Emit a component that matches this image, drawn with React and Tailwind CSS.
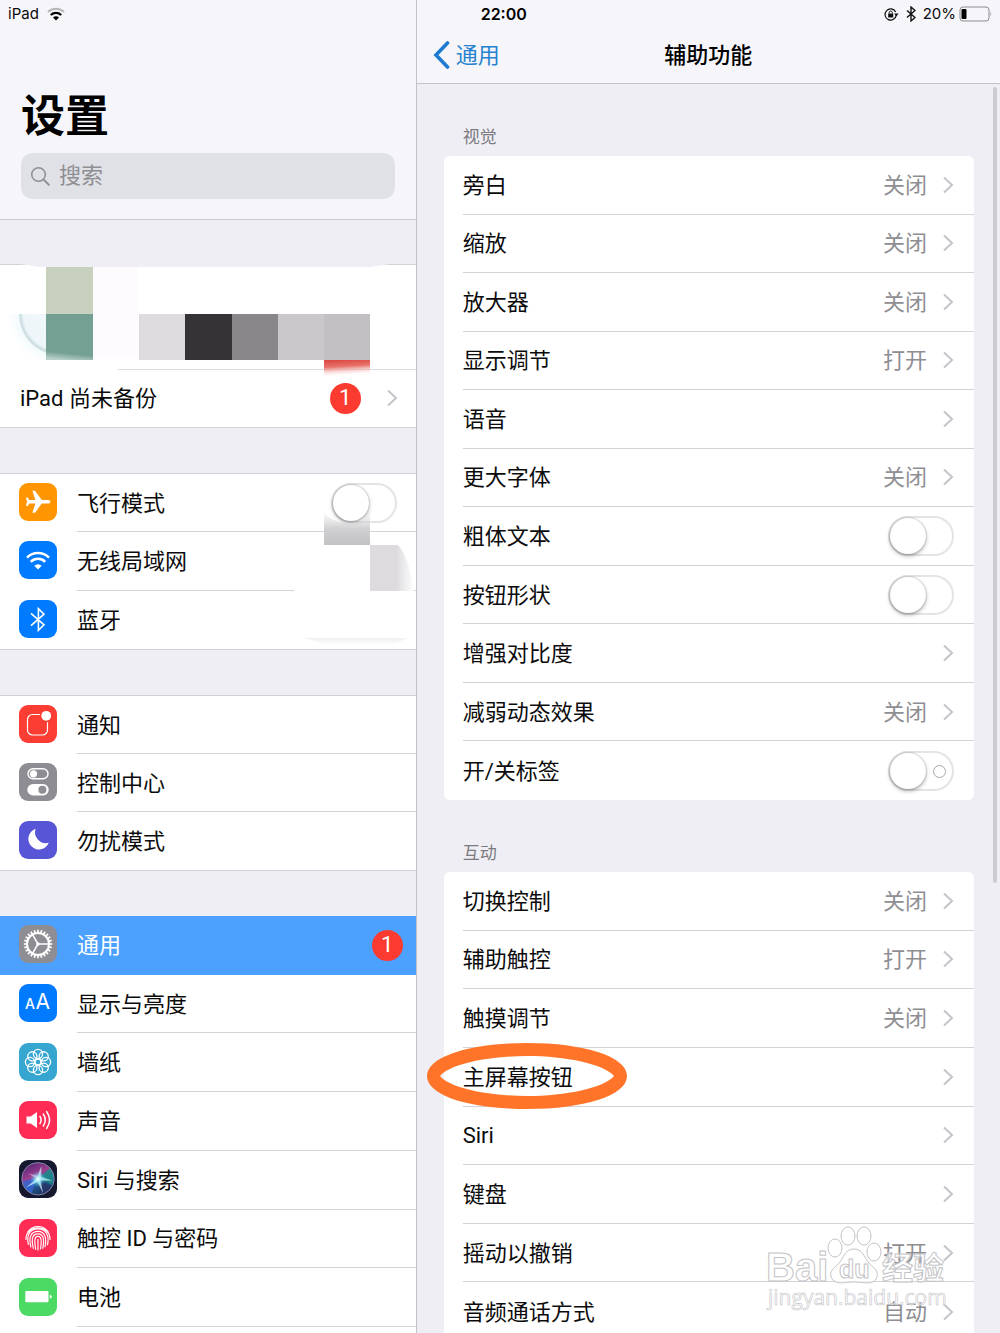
import React from 'react';

const gearTeeth = Array.from({ length: 24 }, (_, i) => i * 15);
const petals = Array.from({ length: 8 }, (_, i) => (i * Math.PI) / 4);

// 38x38 app icons, each one is the inside of an svg
const icons = {
  plane: (
    <path fill="#fff" d="M31.5 18.8c0 1.3-1.5 1.8-3 1.8h-5.7L16 29.8h-2.6l3-9.2-6-.2L8.7 23H7l1-4.2-1-4.4h1.7l1.7 2.7 6-.2-3-9.2H16l6.8 9.2h5.7c1.5 0 3 .6 3 1.9z" />
  ),
  wifi: (
    <g fill="none" stroke="#fff" strokeWidth="2.4">
      <path d="M8 16.6a15.6 15.6 0 0 1 22 0" />
      <path d="M11.8 20.8a10.2 10.2 0 0 1 14.4 0" />
      <path fill="#fff" stroke="none" d="M19 28.4l-3.7-3.7a5.2 5.2 0 0 1 7.4 0z" />
    </g>
  ),
  bluetooth: <path fill="none" stroke="#fff" strokeWidth="1.6" d="M12 13.4l13 11.4-5.6 5.6V8.6l5.6 5.6L12 25.6" />,
  notice: (
    <g>
      <rect x="8.5" y="9.5" width="20" height="20.5" rx="5" fill="none" stroke="#fff" strokeWidth="1.2" />
      <circle cx="27.2" cy="10.8" r="6.6" fill="#fc3d34" />
      <circle cx="27.2" cy="10.8" r="4.9" fill="#fff" />
    </g>
  ),
  control: (
    <g>
      <rect x="9" y="5.8" width="20" height="10" rx="5" fill="none" stroke="#fff" strokeWidth="1.4" />
      <circle cx="14.5" cy="10.8" r="3.6" fill="#fff" />
      <rect x="8.3" y="21" width="21.4" height="11.4" rx="5.7" fill="#fff" />
      <circle cx="23.4" cy="26.7" r="4" fill="#8e8d93" />
    </g>
  ),
  moon: <path fill="#fff" d="M16.6 7.8a10.6 10.6 0 1 0 13.2 14A11 11 0 0 1 16.6 7.8z" />,
  gear: (
    <g stroke="#fff" fill="none">
      <circle cx="19" cy="19" r="11" strokeWidth="2" />
      {gearTeeth.map((a) => (
        <path key={a} d="M19 8.2V4.8" strokeWidth="1.7" transform={`rotate(${a} 19 19)`} />
      ))}
      <path d="M19 19h10.5M19 19l-5.3-9.1M19 19l-5.3 9.1" strokeWidth="1.5" />
      <circle cx="19" cy="19" r="1.3" fill="#fff" />
    </g>
  ),
  display: (
    <g fill="#fff" className="font-['Inter','Liberation_Sans',sans-serif]">
      <text x="6" y="25" fontSize="14" fontWeight="500">A</text>
      <text x="16.5" y="25" fontSize="21">A</text>
    </g>
  ),
  wallpaper: (
    <g fill="none" stroke="#fff" strokeWidth="1.3">
      {petals.map((a) => (
        <circle key={a} cx={19 + 8 * Math.cos(a)} cy={19 + 8 * Math.sin(a)} r="4.6" />
      ))}
      <circle cx="19" cy="19" r="3" />
    </g>
  ),
  sound: (
    <g>
      <path fill="#fff" d="M7.5 15.5h4.2l6.3-4.5v16l-6.3-4.5H7.5z" />
      <g fill="none" stroke="#fff" strokeWidth="1.5" strokeLinecap="round">
        <path d="M21 15.5q2.2 3.5 0 7" />
        <path d="M24.3 13q4 6 0 12" />
        <path d="M27.6 10.5q6 8.500 0 17" />
      </g>
    </g>
  ),
  siri: (
    <g>
      <defs>
        <radialGradient id="siriCore">
          <stop offset="0" stopColor="#fff" />
          <stop offset=".25" stopColor="#bff" stopOpacity=".8" />
          <stop offset="1" stopColor="#3fc6ee" stopOpacity="0" />
        </radialGradient>
        <linearGradient id="siriOrb" x1=".2" y1="0" x2=".7" y2="1">
          <stop offset="0" stopColor="#4d2472" />
          <stop offset=".4" stopColor="#a0408f" />
          <stop offset=".6" stopColor="#24609c" />
          <stop offset="1" stopColor="#173058" />
        </linearGradient>
      </defs>
      <circle cx="19" cy="18.8" r="16" fill="url(#siriOrb)" />
      <path fill="#3a66d8" opacity=".75" d="M18 18L3.500 21q1 8 9 12.500z" />
      <path fill="#1b8f86" opacity=".8" d="M20 18l11-10q6 9 2 17z" />
      <path fill="#2a3468" opacity=".8" d="M20 19l12 8q-4 7-11 7.500z" />
      <path fill="#d6f6ff" opacity=".75" d="M18 17L22.500 6 22 17l11.500 3.500-12 0 2.500 12.500-5.500-11L7 27.500 16 20z" />
      <path fill="#f0b6e4" opacity=".7" d="M17 18L9 13.500l9 2z" />
      <circle cx="19" cy="19" r="8" fill="url(#siriCore)" />
      <circle cx="19" cy="18.8" r="16.2" fill="none" stroke="#9e9bc4" strokeWidth=".8" />
    </g>
  ),
  touch: (
    <g fill="none" stroke="#fff" strokeWidth="1.15" strokeLinecap="round">
      <path d="M9 12.5A12.5 12.5 0 0 1 29 12.5" />
      <path d="M7 20.5C6.5 5 31.5 5 31 20.5" />
      <path d="M9.3 25.5C7.5 16 10.5 9.8 19 9.8s11.5 7 9.5 16" />
      <path d="M11.8 28c-2.3-9.5 0-15.7 7.2-15.7s8.8 7 7 15.5" />
      <path d="M14.3 29.5c-2-9-1.5-14.7 4.7-14.7s6.3 6.5 4.8 14.5" />
      <path d="M16.7 30.5c-1.3-8-1.6-13.2 2.3-13.2s3.6 5.5 2.500 12.7" />
      <path d="M19 20.5V31" />
    </g>
  ),
  battery: (
    <g fill="#fff">
      <rect x="6.3" y="13" width="23.2" height="11.3" rx="1" />
      <path d="M30.8 16.7q2 .3 2 2t-2 2z" />
    </g>
  ),
};

function AppIcon({ name, bg }) {
  return (
    <span className={`mb-[2px] h-[38px] w-[38px] shrink-0 rounded-[9px] ${bg}`}>
      <svg viewBox="0 0 38 38" className="h-full w-full" aria-hidden="true">{icons[name]}</svg>
    </span>
  );
}

const Chevron = () => (
  <svg viewBox="0 0 12 18" className="h-[18px] w-3 shrink-0" aria-hidden="true">
    <path d="M2 1.5L10 9l-8 7.5" fill="none" stroke="#c5c4ca" strokeWidth="2" />
  </svg>
);

const Badge = () => (
  <span className="flex h-[31px] w-[31px] items-center justify-center rounded-full bg-[#fc3b30] text-[22px] leading-none text-white">1</span>
);

function Toggle({ id, mark }) {
  return (
    <span className="relative flex shrink-0">
      <input
        id={id}
        type="checkbox"
        role="switch"
        className="h-10 w-[66px] appearance-none rounded-full border-2 border-[#e4e3e7] bg-white before:block before:h-9 before:w-9 before:rounded-full before:bg-white before:shadow-[0_2px_4px_rgba(0,0,0,0.3),0_0_2px_rgba(0,0,0,0.3)] checked:bg-[#4cd964] checked:before:ml-[26px]"
      />
      {mark && <span className="pointer-events-none absolute top-[14px] right-2 h-[13px] w-[13px] rounded-full border border-[#a9a8ad]" />}
    </span>
  );
}

function SideRow({ icon, bg, label, active, toggle, badge, last }) {
  const Tag = toggle ? 'label' : 'a';
  const link = toggle ? { htmlFor: 'airplane' } : { href: '#' };
  return (
    <li className={active ? 'bg-[#4ca1ff] text-white' : ''}>
      <Tag {...link} className="flex h-full items-center gap-5 pl-[19px]">
        <AppIcon name={icon} bg={bg} />
        <span className={`flex h-full flex-1 items-center justify-between ${last || active ? '' : 'border-b border-[#d3d2d7]'} ${badge ? 'pr-[13px]' : 'pr-[19px]'}`}>
          <span className="pt-[2px]">{label}</span>
          {toggle && <Toggle id="airplane" />}
          {badge && <Badge />}
        </span>
      </Tag>
    </li>
  );
}

const network = [
  { icon: 'plane', bg: 'bg-[#ff9500]', label: '飞行模式', toggle: true },
  { icon: 'wifi', bg: 'bg-[#007aff]', label: '无线局域网' },
  { icon: 'bluetooth', bg: 'bg-[#007aff]', label: '蓝牙', last: true },
];

const alerts = [
  { icon: 'notice', bg: 'bg-[#fc3d34]', label: '通知' },
  { icon: 'control', bg: 'bg-[#8e8d93]', label: '控制中心' },
  { icon: 'moon', bg: 'bg-[#5856d6]', label: '勿扰模式', last: true },
];

const system = [
  { icon: 'gear', bg: 'bg-[#8e8d93]', label: '通用', active: true, badge: true },
  { icon: 'display', bg: 'bg-[#007aff]', label: '显示与亮度' },
  { icon: 'wallpaper', bg: 'bg-[#36a5d0]', label: '墙纸' },
  { icon: 'sound', bg: 'bg-[#ff2d55]', label: '声音' },
  { icon: 'siri', bg: 'bg-[#15182f]', label: 'Siri 与搜索' },
  { icon: 'touch', bg: 'bg-[#ff2d55]', label: '触控 ID 与密码' },
  { icon: 'battery', bg: 'bg-[#4cd964]', label: '电池' },
];

const vision = [
  { label: '旁白', value: '关闭' },
  { label: '缩放', value: '关闭' },
  { label: '放大器', value: '关闭' },
  { label: '显示调节', value: '打开' },
  { label: '语音' },
  { label: '更大字体', value: '关闭' },
  { label: '粗体文本', toggle: 'bold-text' },
  { label: '按钮形状', toggle: 'button-shapes' },
  { label: '增强对比度' },
  { label: '减弱动态效果', value: '关闭' },
  { label: '开/关标签', toggle: 'on-off-labels', mark: true },
];

const interaction = [
  { label: '切换控制', value: '关闭' },
  { label: '辅助触控', value: '打开' },
  { label: '触摸调节', value: '关闭' },
  { label: '主屏幕按钮', ring: true },
  { label: 'Siri' },
  { label: '键盘' },
  { label: '摇动以撤销', value: '打开' },
  { label: '音频通话方式', value: '自动' },
];

// Hand-drawn ring around one row
const Ring = () => (
  <svg viewBox="0 0 202 68" className="pointer-events-none absolute -top-[6px] -left-[37px] h-[68px] w-[202px]" aria-hidden="true">
    <path
      fill="#ff7429"
      fillRule="evenodd"
      d="M101 1C157 1 201 14 201 34S157 67 101 67 1 54 1 34 45 1 101 1zM101 14C62 14 24 22 14 34c10 12 48 20 87 20s77-8 87-20C178 22 140 14 101 14z"
    />
  </svg>
);

function DetailRow({ label, value, toggle, mark, ring }) {
  const Tag = toggle ? 'label' : 'a';
  const link = toggle ? { htmlFor: toggle } : { href: '#' };
  return (
    <li className="relative border-b border-[#d3d2d7] last:border-b-0">
      <Tag {...link} className="flex h-full items-center pr-5">
        <span className="flex-1 pt-[2px]">{label}</span>
        {value && <span className="pt-[2px] text-[#8e8e93]">{value}</span>}
        {toggle ? <Toggle id={toggle} mark={mark} /> : <span className="ml-[15px] flex"><Chevron /></span>}
      </Tag>
      {ring && <Ring />}
    </li>
  );
}

const ProfileMosaic = () => (
  <svg viewBox="0 0 416 118" className="pointer-events-none absolute -top-px left-0 h-[118px] w-[416px]" aria-hidden="true">
    <defs>
      <linearGradient id="redFade" x1=".4" y1="0" x2=".55" y2="1">
        <stop offset="0" stopColor="#db4a43" />
        <stop offset=".35" stopColor="#e8736c" />
        <stop offset=".9" stopColor="#fff" stopOpacity="0" />
      </linearGradient>
      <radialGradient id="avatarFade" gradientUnits="userSpaceOnUse" cx="60" cy="50" r="52">
        <stop offset="0" stopColor="#f1f8fb" />
        <stop offset=".7" stopColor="#eef6f9" />
        <stop offset=".77" stopColor="#c8dbdf" />
        <stop offset=".8" stopColor="#f3fbfd" />
        <stop offset="1" stopColor="#fff" />
      </radialGradient>
      <linearGradient id="tealFade" x1=".5" y1="0" x2=".4" y2="1">
        <stop offset=".85" stopColor="#74a094" />
        <stop offset="1" stopColor="#b9d0c9" />
      </linearGradient>
    </defs>
    <path d="M20 0H390L370 3H40z" fill="#efeef4" />
    <rect x="92" y="3" width="46" height="92" fill="#fdfbfe" />
    <rect x="8" y="50" width="38" height="46" fill="url(#avatarFade)" />
    <rect x="46" y="3" width="47" height="47" fill="#c7d1bd" />
    <rect x="46" y="50" width="47" height="46" fill="url(#tealFade)" />
    <rect x="139" y="50" width="46" height="46" fill="#dddbde" />
    <rect x="185" y="50" width="47" height="46" fill="#363337" />
    <rect x="232" y="50" width="46" height="46" fill="#8a878b" />
    <rect x="278" y="50" width="46" height="46" fill="#cac8cb" />
    <rect x="324" y="50" width="46" height="46" fill="#c2c0c2" />
    <rect x="324" y="96" width="46" height="18" fill="url(#redFade)" />
  </svg>
);

const NetworkSmudge = () => (
  <svg viewBox="0 0 122 176" className="pointer-events-none absolute top-0 right-0 h-[176px] w-[122px]" aria-hidden="true">
    <defs>
      <linearGradient id="smudgeA" x1="0" y1="0" x2="0" y2="1">
        <stop offset="0" stopColor="#dddcde" stopOpacity="0" />
        <stop offset=".55" stopColor="#d0cfd1" />
        <stop offset="1" stopColor="#c2c1c3" />
      </linearGradient>
      <linearGradient id="smudgeB" x1="0" y1="0" x2="1" y2="0">
        <stop offset=".6" stopColor="#dddbde" />
        <stop offset="1" stopColor="#fff" />
      </linearGradient>
      <linearGradient id="smudgeC" x1="0" y1="0" x2="0" y2="1">
        <stop offset="0" stopColor="#f0eff5" />
        <stop offset="1" stopColor="#fff" />
      </linearGradient>
    </defs>
    <rect x="0" y="108" width="76" height="12" fill="#fff" />
    <path d="M30 38q8 11 26 11t20-13v35H30z" fill="url(#smudgeA)" />
    <path d="M76 71h28q10 10 16 46H76z" fill="url(#smudgeB)" />
    <path d="M10 164h104l-16 7H34z" fill="url(#smudgeC)" />
  </svg>
);

const Watermark = () => (
  <svg viewBox="0 0 190 90" className="pointer-events-none absolute right-[50px] bottom-[17px] h-[90px] w-[190px]" aria-hidden="true">
    <g fill="#fff" fillOpacity=".65" stroke="#c4c3c7" strokeWidth="1" className="font-['Liberation_Sans','Noto_Sans_CJK_SC',sans-serif] font-bold">
      <text x="6" y="55" fontSize="40">Bai</text>
      <ellipse cx="75" cy="22" rx="7" ry="9" />
      <ellipse cx="88" cy="10" rx="7" ry="9" />
      <ellipse cx="104" cy="10" rx="7" ry="9" />
      <ellipse cx="114" cy="26" rx="7" ry="9" />
      <path d="M94 23c8 0 10 7 14 13 4 5 11 8 9 15-3 9-13 5-23 5s-19 4-23-5c-2-7 5-10 9-15 4-6 6-13 14-13z" />
      <text x="79" y="52" fontSize="25">du</text>
      <text x="122" y="53" fontSize="31">经验</text>
      <text x="8" y="79" fontSize="21" strokeWidth=".6" className="font-['Open_Sans',sans-serif] font-normal">jingyan.baidu.com</text>
    </g>
  </svg>
);

export default function App() {
  return (
    <div className="relative flex h-screen overflow-hidden bg-[#efeef4] font-['Roboto','Noto_Sans_CJK_SC',sans-serif] text-[22px] leading-8 text-[#0b0b0c]">
      <aside className="w-5/12 shrink-0 border-r border-[#c3c2c8]">
        <header className="border-b border-[#cbcad0] bg-[#f6f5fa] pb-5">
          <div className="flex h-7 items-center gap-2 pl-2 font-['Inter',sans-serif] text-[15px]">
            iPad
            <svg viewBox="0 0 18 14" className="h-[14px] w-[18px]" fill="none" strokeWidth="2.2" aria-label="Wi-Fi">
              <path d="M1 5a11.5 11.5 0 0 1 16 0" stroke="#b6b5ba" />
              <path d="M3.8 8a7.5 7.5 0 0 1 10.4 0" stroke="#000" />
              <path d="M9 13.5L6 10.6a4.2 4.2 0 0 1 6 0z" fill="#000" />
            </svg>
          </div>
          <h1 className="mt-[57px] px-[21px] text-[44px] leading-[64px] font-bold text-black">设置</h1>
          <label className="mx-[21px] mt-1 flex h-[46px] items-center gap-2 rounded-xl bg-[#e0e1e6] px-[9px] text-[#8e8e93]">
            <svg viewBox="0 0 21 21" className="h-[21px] w-[21px] shrink-0" fill="none" stroke="#8e8e93" strokeWidth="1.5" aria-hidden="true">
              <circle cx="8.5" cy="8.5" r="6.8" />
              <path d="M13.4 13.4l6 6" strokeWidth="2" />
            </svg>
            <input type="search" placeholder="搜索" aria-label="搜索" className="w-full bg-transparent outline-none placeholder:text-[#8e8e93]" />
          </label>
        </header>

        <section className="relative mt-11 border-y border-[#d3d2d7] bg-white">
          <div className="h-[104px]" />
          <a href="#" className="flex h-[58px] items-center pr-[18px] pl-5">
            <span className="flex-1 pt-[2px]">iPad 尚未备份</span>
            <Badge />
            <span className="ml-[25px] flex"><Chevron /></span>
          </a>
          <div className="absolute top-[104px] right-0 left-[118px] h-px bg-[#dcdbe0]" />
          <ProfileMosaic />
        </section>

        <ul className="relative mt-[45px] grid h-[177px] auto-rows-fr border-y border-[#d3d2d7] bg-white">
          {network.map((r) => <SideRow key={r.label} {...r} />)}
          <NetworkSmudge />
        </ul>

        <ul className="mt-[45px] grid h-[176px] auto-rows-fr border-y border-[#d3d2d7] bg-white">
          {alerts.map((r) => <SideRow key={r.label} {...r} />)}
        </ul>

        <ul className="mt-[45px] grid h-[467px] auto-rows-fr bg-white pb-14">
          {system.map((r) => <SideRow key={r.label} {...r} />)}
        </ul>
      </aside>

      <main className="relative min-w-0 flex-1">
        <header className="h-[84px] border-b border-[#c3c2c8] bg-[#f6f5fa]">
          <div className="flex h-7 items-center justify-between pr-2 pl-16 font-['Inter',sans-serif] text-[15px]">
            <time className="text-[16px] font-semibold text-black">22:00</time>
            <div className="flex items-center gap-[7px]">
              <svg viewBox="0 0 16 16" className="h-[15px] w-4" aria-label="方向锁定">
                <path d="M13.6 8.5a6 6 0 1 1-.6-3.2" fill="none" stroke="#111" strokeWidth="1.3" />
                <path d="M11.4 7h4.6l-2.3 3z" fill="#111" />
                <rect x="5" y="7" width="5.4" height="4.2" fill="#111" />
                <path d="M6 7.2V6a1.7 1.7 0 0 1 3.4 0v1.2" fill="none" stroke="#111" />
              </svg>
              <svg viewBox="0 0 10 16" className="h-4 w-[10px]" aria-label="蓝牙">
                <path d="M1 4.5l8 7L5 15V1l4 3.5-8 7" fill="none" stroke="#111" strokeWidth="1.4" />
              </svg>
              <span>20%</span>
              <svg viewBox="0 0 33 16" className="-ml-1 h-4 w-[33px]" aria-label="电池电量">
                <rect x="1" y="1" width="29" height="14" rx="3" fill="none" stroke="#8c8b90" />
                <rect x="2.5" y="3" width="5" height="10" rx="1" fill="#000" />
                <path d="M31.500 5.5q1.5 2.5 0 5z" fill="#8c8b90" />
              </svg>
            </div>
          </div>
          <div className="grid h-[54px] grid-cols-[1fr_auto_1fr] items-center">
            <button type="button" className="flex items-center gap-[6px] pl-4 text-[#2683cf]">
              <svg viewBox="0 0 17 28" className="h-7 w-[17px]" fill="none" aria-hidden="true">
                <path d="M14.5 2L3 14l11.5 12" stroke="#1c7bd0" strokeWidth="3.6" strokeLinecap="round" />
              </svg>
              <span className="pt-[2px]">通用</span>
            </button>
            <h2 className="pt-[2px] font-medium text-black">辅助功能</h2>
          </div>
        </header>

        <div className="pr-[26px] pl-[27px]">
          <h3 className="mt-[41px] pl-[19px] text-[17px] leading-6 text-[#7b7a80]">视觉</h3>
          <ul className="mt-[7px] grid h-[644px] auto-rows-fr rounded-md bg-white pl-[19px]">
            {vision.map((r) => <DetailRow key={r.label} {...r} />)}
          </ul>
          <h3 className="mt-[41px] pl-[19px] text-[17px] leading-6 text-[#7b7a80]">互动</h3>
          <ul className="mt-[7px] grid h-[469px] auto-rows-fr rounded-md bg-white pl-[19px]">
            {interaction.map((r) => <DetailRow key={r.label} {...r} />)}
          </ul>
        </div>
        <div className="absolute top-[87px] right-[3px] h-[796px] w-1 rounded-full bg-[#cdccd2]" />
      </main>
      <Watermark />
    </div>
  );
}
